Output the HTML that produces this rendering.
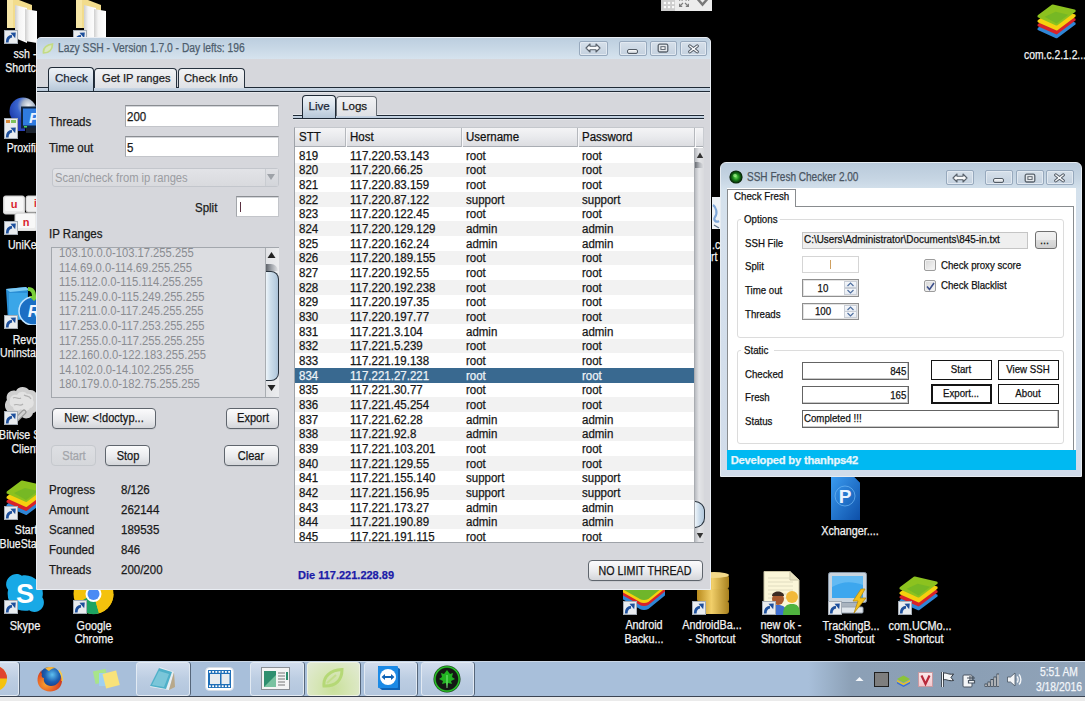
<!DOCTYPE html>
<html><head><meta charset="utf-8"><style>
html,body{margin:0;padding:0;}
body{width:1085px;height:701px;background:#000;position:relative;overflow:hidden;font-family:"Liberation Sans",sans-serif;}
body>div{position:absolute;box-sizing:border-box;}
.t{white-space:nowrap;-webkit-text-stroke:0.25px currentColor;}
</style></head><body>
<svg style="position:absolute;left:5px;top:0px" width="33" height="44" viewBox="0 0 33 44"><defs><linearGradient id="pap" x1="0" x2="1"><stop offset="0" stop-color="#cfcfcf"/><stop offset="0.35" stop-color="#f4f4f4"/><stop offset="1" stop-color="#ffffff"/></linearGradient></defs><path d="M2 0 H14 L27 5 V28 H2 Z" fill="#f2dc8c"/><path d="M2 0 H8 V28 H2 Z" fill="#f6e6a6"/><path d="M10 5 L22 8 V43 L10 38 Z" fill="url(#pap)"/><path d="M20 9 L32 11 V43 L20 41 Z" fill="url(#pap)"/></svg>
<svg style="position:absolute;left:4px;top:30px" width="14" height="14" viewBox="0 0 14 14"><rect x="0.5" y="0.5" width="13" height="13" fill="#e9ecef" stroke="#a5adb6" stroke-width="1"/><path d="M3.2 12.5 C3.2 8.5 5 6.5 8 6.2" stroke="#1d4f9c" stroke-width="2.8" fill="none"/><path d="M6.5 2.8 L11.8 2.6 L11.2 8.2 Z" fill="#1d4f9c"/></svg>
<div class="t" style="left:-125px;width:300px;text-align:center;top:48.24px;font-size:12px;line-height:12px;color:#f4f4f4;text-shadow:0 1px 1px #000,0 0 2px #000;transform:scaleX(0.88);transform-origin:50% 0;">ssh -</div>
<div class="t" style="left:-125px;width:300px;text-align:center;top:61.94px;font-size:12px;line-height:12px;color:#f4f4f4;text-shadow:0 1px 1px #000,0 0 2px #000;transform:scaleX(0.88);transform-origin:50% 0;">Shortcut</div>
<svg style="position:absolute;left:74px;top:0px" width="33" height="44" viewBox="0 0 33 44"><defs><linearGradient id="pap" x1="0" x2="1"><stop offset="0" stop-color="#cfcfcf"/><stop offset="0.35" stop-color="#f4f4f4"/><stop offset="1" stop-color="#ffffff"/></linearGradient></defs><path d="M2 0 H14 L27 5 V28 H2 Z" fill="#f2dc8c"/><path d="M2 0 H8 V28 H2 Z" fill="#f6e6a6"/><path d="M10 5 L22 8 V43 L10 38 Z" fill="url(#pap)"/><path d="M20 9 L32 11 V43 L20 41 Z" fill="url(#pap)"/></svg>
<svg style="position:absolute;left:73px;top:30px" width="14" height="14" viewBox="0 0 14 14"><rect x="0.5" y="0.5" width="13" height="13" fill="#e9ecef" stroke="#a5adb6" stroke-width="1"/><path d="M3.2 12.5 C3.2 8.5 5 6.5 8 6.2" stroke="#1d4f9c" stroke-width="2.8" fill="none"/><path d="M6.5 2.8 L11.8 2.6 L11.2 8.2 Z" fill="#1d4f9c"/></svg>
<svg style="position:absolute;left:8px;top:96px" width="30" height="40" viewBox="0 0 30 40"><defs><radialGradient id="pg" cx="70%" cy="30%" r="75%"><stop offset="0" stop-color="#f0f2f4"/><stop offset="0.3" stop-color="#aab6c8"/><stop offset="0.55" stop-color="#3a66d0"/><stop offset="1" stop-color="#1f3fae"/></radialGradient></defs><circle cx="15" cy="15" r="13.5" fill="url(#pg)"/><rect x="5" y="24" width="12" height="11" fill="#2a40b8"/><rect x="13" y="10.5" width="18" height="22" fill="#10243f"/><rect x="15" y="12.5" width="16" height="17" fill="#2f7be0"/><text x="21" y="27" font-family="Liberation Sans" font-weight="bold" font-style="italic" font-size="15" fill="#e8f2ff">P</text><rect x="18" y="32" width="10" height="5" fill="#1c2430"/><rect x="16" y="30" width="3" height="1.5" fill="#4fd35a"/></svg>
<svg style="position:absolute;left:4px;top:118px" width="14" height="21" viewBox="0 0 14 21"><rect x="0.5" y="0.5" width="13" height="20" fill="#e9ecef" stroke="#a5adb6"/><rect x="2" y="2" width="4" height="3" fill="#d88a3a"/><rect x="7" y="2" width="5" height="3" fill="#7cc25a"/><g transform="translate(0 7)"><path d="M3.2 12.5 C3.2 8.5 5 6.5 8 6.2" stroke="#1d4f9c" stroke-width="2.8" fill="none"/><path d="M6.5 2.8 L11.8 2.6 L11.2 8.2 Z" fill="#1d4f9c"/></g></svg>
<div class="t" style="left:-124.5px;width:300px;text-align:center;top:142.44px;font-size:12px;line-height:12px;color:#f4f4f4;text-shadow:0 1px 1px #000,0 0 2px #000;transform:scaleX(0.88);transform-origin:50% 0;">Proxifier</div>
<svg style="position:absolute;left:3px;top:195px" width="34" height="36" viewBox="0 0 34 36"><rect x="0.5" y="1" width="21" height="18" rx="2" fill="#e9e9e9" stroke="#cfcfcf"/><rect x="2" y="2" width="18" height="14" rx="1.5" fill="#f7f7f7"/><text x="11" y="13" font-family="Liberation Sans" font-weight="bold" font-size="11" fill="#d9242f" text-anchor="middle">u</text><rect x="23" y="1" width="14" height="16" rx="2" fill="#efefef" stroke="#cfcfcf"/><text x="31" y="12" font-family="Liberation Sans" font-weight="bold" font-size="10" fill="#d9242f">i</text><rect x="12" y="18" width="22" height="18" rx="2" fill="#ebebeb" stroke="#cfcfcf"/><rect x="13" y="19" width="19" height="14" rx="1.5" fill="#f8f8f8"/><text x="23" y="31" font-family="Liberation Sans" font-weight="bold" font-size="11" fill="#d9242f" text-anchor="middle">n</text></svg>
<svg style="position:absolute;left:4px;top:220.5px" width="14" height="14" viewBox="0 0 14 14"><rect x="0.5" y="0.5" width="13" height="13" fill="#e9ecef" stroke="#a5adb6" stroke-width="1"/><path d="M3.2 12.5 C3.2 8.5 5 6.5 8 6.2" stroke="#1d4f9c" stroke-width="2.8" fill="none"/><path d="M6.5 2.8 L11.8 2.6 L11.2 8.2 Z" fill="#1d4f9c"/></svg>
<div class="t" style="left:-125px;width:300px;text-align:center;top:238.94px;font-size:12px;line-height:12px;color:#f4f4f4;text-shadow:0 1px 1px #000,0 0 2px #000;transform:scaleX(0.88);transform-origin:50% 0;">UniKey</div>
<svg style="position:absolute;left:4px;top:285px" width="33" height="40" viewBox="0 0 33 40"><path d="M2 4 L22 2 L24 6 V34 L4 36 Z" fill="#2a8fd6"/><path d="M2 4 L22 2 L26 5 L6 7 Z" fill="#7ccaf5"/><rect x="5" y="8" width="18" height="26" fill="#3aa6e8"/><circle cx="29" cy="26" r="14" fill="#1b6fc4" stroke="#bfe3ff" stroke-width="1.5"/><text x="30" y="32" font-family="Liberation Sans" font-weight="bold" font-style="italic" font-size="17" fill="#f0f6ff" text-anchor="middle">R</text><path d="M24 2 C30 2 32 6 32 11 L35 11 L30 16 L25 11 L28 11 C28 8 27 6 24 6 Z" fill="#7bcf3a"/></svg>
<svg style="position:absolute;left:4px;top:315px" width="14" height="14" viewBox="0 0 14 14"><rect x="0.5" y="0.5" width="13" height="13" fill="#e9ecef" stroke="#a5adb6" stroke-width="1"/><path d="M3.2 12.5 C3.2 8.5 5 6.5 8 6.2" stroke="#1d4f9c" stroke-width="2.8" fill="none"/><path d="M6.5 2.8 L11.8 2.6 L11.2 8.2 Z" fill="#1d4f9c"/></svg>
<div class="t" style="left:-125px;width:300px;text-align:center;top:334.34px;font-size:12px;line-height:12px;color:#f4f4f4;text-shadow:0 1px 1px #000,0 0 2px #000;transform:scaleX(0.88);transform-origin:50% 0;">Revo</div>
<div class="t" style="left:-125px;width:300px;text-align:center;top:347.14px;font-size:12px;line-height:12px;color:#f4f4f4;text-shadow:0 1px 1px #000,0 0 2px #000;transform:scaleX(0.88);transform-origin:50% 0;">Uninstaller</div>
<svg style="position:absolute;left:4px;top:386px" width="33" height="36" viewBox="0 0 33 36"><path d="M3 14 C1 8 7 3 12 5 C14 0 22 0 25 4 C31 3 35 9 33 14 C36 18 34 26 29 27 C28 33 20 34 17 30 C13 34 5 32 5 26 C0 24 0 17 3 14 Z" fill="#cfcfcf"/><path d="M6 14 C6 10 10 8 13 9 C15 5 21 5 23 8 C27 7 30 11 29 14 C31 17 29 22 26 22 C24 26 19 26 17 23 C14 26 9 25 9 21 C6 20 5 17 6 14 Z" fill="#e6e6e6" opacity="0.8"/><path d="M9 12 C12 10 14 14 17 12 M20 9 C23 11 25 9 27 13 M10 19 C13 17 16 21 19 18" stroke="#b0b0b0" stroke-width="1.2" fill="none"/><path d="M20 26 L13 33" stroke="#9a9a9a" stroke-width="5" stroke-linecap="round"/><path d="M20 26 L13 33" stroke="#d0d0d0" stroke-width="2.5" stroke-linecap="round"/></svg>
<svg style="position:absolute;left:4px;top:411px" width="14" height="14" viewBox="0 0 14 14"><rect x="0.5" y="0.5" width="13" height="13" fill="#e9ecef" stroke="#a5adb6" stroke-width="1"/><path d="M3.2 12.5 C3.2 8.5 5 6.5 8 6.2" stroke="#1d4f9c" stroke-width="2.8" fill="none"/><path d="M6.5 2.8 L11.8 2.6 L11.2 8.2 Z" fill="#1d4f9c"/></svg>
<div class="t" style="left:-123.2px;width:300px;text-align:center;top:428.84px;font-size:12px;line-height:12px;color:#f4f4f4;text-shadow:0 1px 1px #000,0 0 2px #000;transform:scaleX(0.88);transform-origin:50% 0;">Bitvise SSH</div>
<div class="t" style="left:-125px;width:300px;text-align:center;top:442.64px;font-size:12px;line-height:12px;color:#f4f4f4;text-shadow:0 1px 1px #000,0 0 2px #000;transform:scaleX(0.88);transform-origin:50% 0;">Client</div>
<svg style="position:absolute;left:5px;top:480px" width="43" height="37" viewBox="0 0 43 37"><g transform="scale(1.0)"><path d="M3 12.5 L17 2 L39 7 L21 20.5 Z" transform="translate(0 13)" fill="#2f86d6" stroke="#2f86d6" stroke-width="3" stroke-linejoin="round"/><path d="M3 12.5 L17 2 L39 7 L21 20.5 Z" transform="translate(0 9)" fill="#d8232a" stroke="#d8232a" stroke-width="3" stroke-linejoin="round"/><path d="M3 12.5 L17 2 L39 7 L21 20.5 Z" transform="translate(0 5)" fill="#f6d10f" stroke="#f6d10f" stroke-width="3" stroke-linejoin="round"/><path d="M3 12.5 L17 2 L39 7 L21 20.5 Z" fill="#8cc21f" stroke="#8cc21f" stroke-width="3" stroke-linejoin="round"/><path d="M9 13 L21 20 L33 11 L20 8 Z" fill="#5fae2a" opacity="0.5"/></g></svg>
<svg style="position:absolute;left:4px;top:506px" width="14" height="14" viewBox="0 0 14 14"><rect x="0.5" y="0.5" width="13" height="13" fill="#e9ecef" stroke="#a5adb6" stroke-width="1"/><path d="M3.2 12.5 C3.2 8.5 5 6.5 8 6.2" stroke="#1d4f9c" stroke-width="2.8" fill="none"/><path d="M6.5 2.8 L11.8 2.6 L11.2 8.2 Z" fill="#1d4f9c"/></svg>
<div class="t" style="left:-124px;width:300px;text-align:center;top:524.14px;font-size:12px;line-height:12px;color:#f4f4f4;text-shadow:0 1px 1px #000,0 0 2px #000;transform:scaleX(0.88);transform-origin:50% 0;">Start</div>
<div class="t" style="left:-124px;width:300px;text-align:center;top:537.54px;font-size:12px;line-height:12px;color:#f4f4f4;text-shadow:0 1px 1px #000,0 0 2px #000;transform:scaleX(0.88);transform-origin:50% 0;">BlueStacks</div>
<svg style="position:absolute;left:4px;top:572px" width="42" height="42" viewBox="0 0 42 42"><g transform="scale(1.05)"><path d="M12 2 C7 2 2 6 2 12 C2 14 3 16 4 17 C3.5 18.5 3.5 20 3.5 21 C3.5 31 11 37 20 37 C22 37 23 37 24 36.5 C25.5 37.5 27 38 29 38 C34 38 38 34 38 29 C38 27 37.5 25.5 36.5 24 C37 22.5 37 21 37 20 C37 11 29 3 20 3 C19 3 18 3 17 3.5 C15.5 2.5 14 2 12 2 Z" fill="#18a9e6"/><text x="20" y="30" font-family="Liberation Sans" font-weight="bold" font-size="26" fill="#fff" text-anchor="middle">S</text></g></svg>
<svg style="position:absolute;left:4px;top:600px" width="14" height="14" viewBox="0 0 14 14"><rect x="0.5" y="0.5" width="13" height="13" fill="#e9ecef" stroke="#a5adb6" stroke-width="1"/><path d="M3.2 12.5 C3.2 8.5 5 6.5 8 6.2" stroke="#1d4f9c" stroke-width="2.8" fill="none"/><path d="M6.5 2.8 L11.8 2.6 L11.2 8.2 Z" fill="#1d4f9c"/></svg>
<div class="t" style="left:-125px;width:300px;text-align:center;top:619.64px;font-size:12px;line-height:12px;color:#f4f4f4;text-shadow:0 1px 1px #000,0 0 2px #000;transform:scaleX(0.92);transform-origin:50% 0;">Skype</div>
<svg style="position:absolute;left:73px;top:589px" width="42" height="26" viewBox="0 0 42 26"><circle cx="20.5" cy="5" r="20" fill="#f4c20d"/><path d="M20.5 5 L3 15 A20 20 0 0 0 26 24.3 Z" fill="#1da462"/><path d="M20.5 5 L40.5 5 A20 20 0 0 1 26 24.3 Z" fill="#f4c20d"/><circle cx="20.5" cy="5" r="8" fill="#fff"/><circle cx="20.5" cy="5" r="6" fill="#4a8af4"/></svg>
<svg style="position:absolute;left:73px;top:600px" width="14" height="14" viewBox="0 0 14 14"><rect x="0.5" y="0.5" width="13" height="13" fill="#e9ecef" stroke="#a5adb6" stroke-width="1"/><path d="M3.2 12.5 C3.2 8.5 5 6.5 8 6.2" stroke="#1d4f9c" stroke-width="2.8" fill="none"/><path d="M6.5 2.8 L11.8 2.6 L11.2 8.2 Z" fill="#1d4f9c"/></svg>
<div class="t" style="left:-56px;width:300px;text-align:center;top:619.64px;font-size:12px;line-height:12px;color:#f4f4f4;text-shadow:0 1px 1px #000,0 0 2px #000;transform:scaleX(0.9);transform-origin:50% 0;">Google</div>
<div class="t" style="left:-56px;width:300px;text-align:center;top:633.04px;font-size:12px;line-height:12px;color:#f4f4f4;text-shadow:0 1px 1px #000,0 0 2px #000;transform:scaleX(0.9);transform-origin:50% 0;">Chrome</div>
<svg style="position:absolute;left:1036px;top:4px" width="42" height="36" viewBox="0 0 42 36"><g transform="scale(0.98)"><path d="M3 12.5 L17 2 L39 7 L21 20.5 Z" transform="translate(0 13)" fill="#2f86d6" stroke="#2f86d6" stroke-width="3" stroke-linejoin="round"/><path d="M3 12.5 L17 2 L39 7 L21 20.5 Z" transform="translate(0 9)" fill="#d8232a" stroke="#d8232a" stroke-width="3" stroke-linejoin="round"/><path d="M3 12.5 L17 2 L39 7 L21 20.5 Z" transform="translate(0 5)" fill="#f6d10f" stroke="#f6d10f" stroke-width="3" stroke-linejoin="round"/><path d="M3 12.5 L17 2 L39 7 L21 20.5 Z" fill="#8cc21f" stroke="#8cc21f" stroke-width="3" stroke-linejoin="round"/><path d="M9 13 L21 20 L33 11 L20 8 Z" fill="#5fae2a" opacity="0.5"/></g></svg>
<div class="t" style="left:905px;width:300px;text-align:center;top:48.64px;font-size:12px;line-height:12px;color:#f4f4f4;text-shadow:0 1px 1px #000,0 0 2px #000;transform:scaleX(0.86);transform-origin:50% 0;">com.c.2.1.2...</div>
<svg style="position:absolute;left:622px;top:587px" width="46" height="26" viewBox="0 0 46 26"><path d="M2 0 H42 V8 L26 21 Q22 23 18 21 L2 12 Z" fill="#2f86d6" stroke="#2f86d6" stroke-width="2" stroke-linejoin="round"/><path d="M2 0 H42 V4 L26 17 Q22 19 18 17 L2 8 Z" fill="#d8232a" stroke="#d8232a" stroke-width="2" stroke-linejoin="round"/><path d="M2 0 H42 V1 L26 14 Q22 16 18 14 L2 5 Z" fill="#f6d10f" stroke="#f6d10f" stroke-width="2" stroke-linejoin="round"/><path d="M2 0 H42 V-2 L26 11 Q22 13 18 11 L2 2 Z" fill="#6fb62a" stroke="#6fb62a" stroke-width="2" stroke-linejoin="round"/></svg>
<svg style="position:absolute;left:623px;top:601px" width="14" height="14" viewBox="0 0 14 14"><rect x="0.5" y="0.5" width="13" height="13" fill="#e9ecef" stroke="#a5adb6" stroke-width="1"/><path d="M3.2 12.5 C3.2 8.5 5 6.5 8 6.2" stroke="#1d4f9c" stroke-width="2.8" fill="none"/><path d="M6.5 2.8 L11.8 2.6 L11.2 8.2 Z" fill="#1d4f9c"/></svg>
<div class="t" style="left:493.5px;width:300px;text-align:center;top:618.84px;font-size:12px;line-height:12px;color:#f4f4f4;text-shadow:0 1px 1px #000,0 0 2px #000;transform:scaleX(0.9);transform-origin:50% 0;">Android</div>
<div class="t" style="left:493.5px;width:300px;text-align:center;top:632.64px;font-size:12px;line-height:12px;color:#f4f4f4;text-shadow:0 1px 1px #000,0 0 2px #000;transform:scaleX(0.9);transform-origin:50% 0;">Backu...</div>
<svg style="position:absolute;left:695px;top:571px" width="36" height="44" viewBox="0 0 36 44"><defs><linearGradient id="gold" x1="0" x2="1"><stop offset="0" stop-color="#b88a1c"/><stop offset="0.45" stop-color="#f1cf6a"/><stop offset="1" stop-color="#a8801e"/></linearGradient></defs><rect x="2" y="30" width="32" height="13" rx="3" fill="url(#gold)"/><rect x="2" y="17" width="32" height="14" rx="3" fill="url(#gold)"/><rect x="4" y="4" width="30" height="14" rx="3" fill="url(#gold)"/><ellipse cx="19" cy="4" rx="15" ry="3" fill="#f3d98a"/></svg>
<svg style="position:absolute;left:692px;top:601px" width="14" height="14" viewBox="0 0 14 14"><rect x="0.5" y="0.5" width="13" height="13" fill="#e9ecef" stroke="#a5adb6" stroke-width="1"/><path d="M3.2 12.5 C3.2 8.5 5 6.5 8 6.2" stroke="#1d4f9c" stroke-width="2.8" fill="none"/><path d="M6.5 2.8 L11.8 2.6 L11.2 8.2 Z" fill="#1d4f9c"/></svg>
<div class="t" style="left:562px;width:300px;text-align:center;top:618.84px;font-size:12px;line-height:12px;color:#f4f4f4;text-shadow:0 1px 1px #000,0 0 2px #000;transform:scaleX(0.9);transform-origin:50% 0;">AndroidBa...</div>
<div class="t" style="left:562px;width:300px;text-align:center;top:632.64px;font-size:12px;line-height:12px;color:#f4f4f4;text-shadow:0 1px 1px #000,0 0 2px #000;transform:scaleX(0.9);transform-origin:50% 0;">- Shortcut</div>
<svg style="position:absolute;left:763px;top:571px" width="38" height="44" viewBox="0 0 38 44"><path d="M1 0.5 H27 L36 9 V43.5 H1 Z" fill="#fbf6d8" stroke="#c9c3a5"/><path d="M27 0.5 V9 H36" fill="#e8e2c0" stroke="#c9c3a5"/><path d="M5 7 H30" stroke="#e0dcc0" stroke-width="1"/><path d="M5 11 H30" stroke="#e0dcc0" stroke-width="1"/><path d="M5 15 H30" stroke="#e0dcc0" stroke-width="1"/><path d="M5 19 H30" stroke="#e0dcc0" stroke-width="1"/><path d="M5 23 H30" stroke="#e0dcc0" stroke-width="1"/><path d="M5 27 H30" stroke="#e0dcc0" stroke-width="1"/><circle cx="15" cy="28" r="6" fill="#a8592e"/><path d="M9 25 C9 19 21 19 21 25" fill="#3a2a22"/><path d="M6 44 C6 36 10 34 15 34 C20 34 24 36 24 44 Z" fill="#3f6fd0"/><circle cx="29" cy="26" r="6" fill="#f2b93a"/><path d="M20 44 C20 35 24 33 29 33 C34 33 37 35 37 44 Z" fill="#4fb33f"/></svg>
<svg style="position:absolute;left:762px;top:601px" width="14" height="14" viewBox="0 0 14 14"><rect x="0.5" y="0.5" width="13" height="13" fill="#e9ecef" stroke="#a5adb6" stroke-width="1"/><path d="M3.2 12.5 C3.2 8.5 5 6.5 8 6.2" stroke="#1d4f9c" stroke-width="2.8" fill="none"/><path d="M6.5 2.8 L11.8 2.6 L11.2 8.2 Z" fill="#1d4f9c"/></svg>
<div class="t" style="left:631px;width:300px;text-align:center;top:618.84px;font-size:12px;line-height:12px;color:#f4f4f4;text-shadow:0 1px 1px #000,0 0 2px #000;transform:scaleX(0.9);transform-origin:50% 0;">new ok -</div>
<div class="t" style="left:631px;width:300px;text-align:center;top:632.64px;font-size:12px;line-height:12px;color:#f4f4f4;text-shadow:0 1px 1px #000,0 0 2px #000;transform:scaleX(0.9);transform-origin:50% 0;">Shortcut</div>
<svg style="position:absolute;left:828px;top:476px" width="34" height="45" viewBox="0 0 34 45"><path d="M3 1 H26 L32 7 V44 H3 Z" fill="#1f6fcf"/><path d="M3 1 H26 L32 7 V44 H3 Z" fill="url(#xg)"/><defs><linearGradient id="xg" x1="0" y1="0" x2="1" y2="1"><stop offset="0" stop-color="#3a9bf0"/><stop offset="1" stop-color="#0d4fa8"/></linearGradient></defs><circle cx="17" cy="20" r="10" fill="none" stroke="#6fb8f5" stroke-width="1" opacity="0.7"/><text x="17" y="27" font-family="Liberation Sans" font-weight="bold" font-size="19" fill="#eaf4ff" text-anchor="middle">P</text></svg>
<div class="t" style="left:699.5px;width:300px;text-align:center;top:524.84px;font-size:12px;line-height:12px;color:#f4f4f4;text-shadow:0 1px 1px #000,0 0 2px #000;transform:scaleX(0.9);transform-origin:50% 0;">Xchanger....</div>
<svg style="position:absolute;left:827px;top:571px" width="46" height="43" viewBox="0 0 46 43"><rect x="1.5" y="1.5" width="38" height="30" rx="2" fill="#c9d4de" stroke="#8695a5"/><rect x="5" y="5" width="31" height="22" fill="#3da7ee"/><path d="M5 5 H36 V14 C25 10 15 10 5 16 Z" fill="#7cc6f6" opacity="0.6"/><rect x="10" y="32" width="22" height="4" fill="#aab4bf"/><rect x="6" y="36" width="30" height="6" rx="1" fill="#dfe5eb" stroke="#9aa5b1"/><path d="M34 18 L26 30 H31 L27 42 L39 27 H33 L38 18 Z" fill="#f5c21b" stroke="#b88a10" stroke-width="0.8"/></svg>
<svg style="position:absolute;left:828px;top:601px" width="14" height="14" viewBox="0 0 14 14"><rect x="0.5" y="0.5" width="13" height="13" fill="#e9ecef" stroke="#a5adb6" stroke-width="1"/><path d="M3.2 12.5 C3.2 8.5 5 6.5 8 6.2" stroke="#1d4f9c" stroke-width="2.8" fill="none"/><path d="M6.5 2.8 L11.8 2.6 L11.2 8.2 Z" fill="#1d4f9c"/></svg>
<div class="t" style="left:701px;width:300px;text-align:center;top:619.84px;font-size:12px;line-height:12px;color:#f4f4f4;text-shadow:0 1px 1px #000,0 0 2px #000;transform:scaleX(0.9);transform-origin:50% 0;">TrackingB...</div>
<div class="t" style="left:701px;width:300px;text-align:center;top:632.64px;font-size:12px;line-height:12px;color:#f4f4f4;text-shadow:0 1px 1px #000,0 0 2px #000;transform:scaleX(0.9);transform-origin:50% 0;">- Shortcut</div>
<svg style="position:absolute;left:898px;top:576px" width="42" height="36" viewBox="0 0 42 36"><g transform="scale(0.98)"><path d="M3 12.5 L17 2 L39 7 L21 20.5 Z" transform="translate(0 13)" fill="#2f86d6" stroke="#2f86d6" stroke-width="3" stroke-linejoin="round"/><path d="M3 12.5 L17 2 L39 7 L21 20.5 Z" transform="translate(0 9)" fill="#d8232a" stroke="#d8232a" stroke-width="3" stroke-linejoin="round"/><path d="M3 12.5 L17 2 L39 7 L21 20.5 Z" transform="translate(0 5)" fill="#f6d10f" stroke="#f6d10f" stroke-width="3" stroke-linejoin="round"/><path d="M3 12.5 L17 2 L39 7 L21 20.5 Z" fill="#8cc21f" stroke="#8cc21f" stroke-width="3" stroke-linejoin="round"/><path d="M9 13 L21 20 L33 11 L20 8 Z" fill="#5fae2a" opacity="0.5"/></g></svg>
<svg style="position:absolute;left:898px;top:601px" width="14" height="14" viewBox="0 0 14 14"><rect x="0.5" y="0.5" width="13" height="13" fill="#e9ecef" stroke="#a5adb6" stroke-width="1"/><path d="M3.2 12.5 C3.2 8.5 5 6.5 8 6.2" stroke="#1d4f9c" stroke-width="2.8" fill="none"/><path d="M6.5 2.8 L11.8 2.6 L11.2 8.2 Z" fill="#1d4f9c"/></svg>
<div class="t" style="left:769.5px;width:300px;text-align:center;top:619.84px;font-size:12px;line-height:12px;color:#f4f4f4;text-shadow:0 1px 1px #000,0 0 2px #000;transform:scaleX(0.9);transform-origin:50% 0;">com.UCMo...</div>
<div class="t" style="left:769.5px;width:300px;text-align:center;top:632.64px;font-size:12px;line-height:12px;color:#f4f4f4;text-shadow:0 1px 1px #000,0 0 2px #000;transform:scaleX(0.9);transform-origin:50% 0;">- Shortcut</div>
<svg style="position:absolute;left:711.5px;top:196.5px" width="8" height="32" viewBox="0 0 8 32"><rect x="0" y="0" width="8" height="32" fill="#eef2f6"/><path d="M1 8 C4 10 6 16 3 20 C1 23 4 26 7 24" stroke="#7fa7d9" stroke-width="2.2" fill="none"/><path d="M2 28 L7 31" stroke="#5a6f88" stroke-width="1.2"/></svg>
<div class="t" style="left:712px;top:239.14px;font-size:12px;line-height:12px;color:#f4f4f4;transform:scaleX(0.88);transform-origin:0 0;">.c</div>
<div class="t" style="left:711px;top:250.54px;font-size:12px;line-height:12px;color:#f4f4f4;transform:scaleX(0.88);transform-origin:0 0;">rt</div>
<div style="left:36px;top:37px;width:675px;height:553px;background:#d6d7dc;border:1px solid #e9edf3;border-top-left-radius:5px;border-top-right-radius:5px;"></div>
<div style="left:37px;top:38px;width:673px;height:20.5px;background:linear-gradient(#bccedf,#c8d8e6 50%,#d6e3ee);border-top-left-radius:4px;border-top-right-radius:4px;"></div>
<svg style="position:absolute;left:41.5px;top:42.5px" width="12" height="11" viewBox="0 0 12 11"><path d="M1.5 10 C1 5.5 4 2 10.5 1 C10.5 6.5 7 10 1.5 10 Z" fill="#d9e7c0" stroke="#c3db84" stroke-width="1.7"/></svg>
<div class="t" style="left:58.3px;top:42.44px;font-size:12px;line-height:12px;color:#4e5e6e;transform:scaleX(0.856);transform-origin:0 0;">Lazy SSH - Version 1.7.0 - Day lefts: 196</div>
<div style="left:579px;top:41px;width:28.5px;height:14.5px;border:1px solid #97a9bd;border-radius:2px;background:linear-gradient(#d6e0ea,#c4d1df);box-shadow:inset 0 0 0 1px #e2e9f1;"></div>
<div style="left:618.5px;top:41px;width:28.0px;height:14.5px;border:1px solid #97a9bd;border-radius:2px;background:linear-gradient(#d6e0ea,#c4d1df);box-shadow:inset 0 0 0 1px #e2e9f1;"></div>
<div style="left:649.5px;top:41px;width:27.5px;height:14.5px;border:1px solid #97a9bd;border-radius:2px;background:linear-gradient(#d6e0ea,#c4d1df);box-shadow:inset 0 0 0 1px #e2e9f1;"></div>
<div style="left:679.5px;top:41px;width:27.5px;height:14.5px;border:1px solid #97a9bd;border-radius:2px;background:linear-gradient(#d6e0ea,#c4d1df);box-shadow:inset 0 0 0 1px #e2e9f1;"></div>
<svg style="position:absolute;left:585.25px;top:43.25px" width="16" height="10" viewBox="0 0 16 10"><path d="M1 5 L5 1 V3.3 H11 V1 L15 5 L11 9 V6.7 H5 V9 Z" fill="#fafbfc" stroke="#58616b" stroke-width="1.1" stroke-linejoin="round"/></svg>
<div style="left:627.0px;top:48.75px;width:11px;height:5px;border:1px solid #525b65;border-radius:2px;background:linear-gradient(#ffffff,#dfe3e7 60%,#b9bfc6);"></div>
<svg style="position:absolute;left:657.25px;top:43.25px" width="12" height="10" viewBox="0 0 12 10"><rect x="1.2" y="1.2" width="9.6" height="7.8" rx="1.5" fill="#e3e7eb" stroke="#5a636d" stroke-width="1.3"/><rect x="3.9" y="3.7" width="4.2" height="2.7" fill="#fdfdfd" stroke="#5a636d" stroke-width="1"/></svg>
<svg style="position:absolute;left:686.75px;top:43.75px" width="13" height="10" viewBox="0 0 13 10"><path d="M2.8 2 L10.2 7.8 M10.2 2 L2.8 7.8" stroke="#535c66" stroke-width="3.3" stroke-linecap="round"/><path d="M2.8 2 L10.2 7.8 M10.2 2 L2.8 7.8" stroke="#f7f8fa" stroke-width="1.4" stroke-linecap="round"/></svg>
<div style="left:37px;top:87px;width:673px;height:1px;background:#1f2a36;"></div>
<div style="left:37px;top:88px;width:673px;height:3px;background:linear-gradient(#c9d6e4,#b9c9da);"></div>
<div style="left:37px;top:91px;width:673px;height:1px;background:#1f2a36;"></div>
<div style="left:37px;top:92px;width:673px;height:1px;background:#e4e6ea;"></div>
<div style="left:94px;top:68px;width:83px;height:20px;border:1px solid #27323e;border-bottom:none;border-radius:4px 4px 0 0;background:linear-gradient(#f2f3f5,#dfe1e5);"></div>
<div style="left:177.5px;top:68px;width:67.5px;height:20px;border:1px solid #27323e;border-bottom:none;border-radius:4px 4px 0 0;background:linear-gradient(#f2f3f5,#dfe1e5);"></div>
<div style="left:47.5px;top:67px;width:46.0px;height:24px;border:1px solid #1f2a36;border-bottom:none;border-radius:4px 4px 0 0;background:linear-gradient(#eef2f6,#dce5ee 40%,#b6c7d8);"></div>
<div class="t" style="left:55px;top:71.58px;font-size:11.6px;line-height:11.6px;color:#1b2736;">Check</div>
<div class="t" style="left:101.8px;top:71.58px;font-size:11.6px;line-height:11.6px;color:#1b1b1b;transform:scaleX(0.96);transform-origin:0 0;">Get IP ranges</div>
<div class="t" style="left:184.3px;top:71.58px;font-size:11.6px;line-height:11.6px;color:#1b1b1b;transform:scaleX(0.97);transform-origin:0 0;">Check Info</div>
<div class="t" style="left:48.7px;top:116.04px;font-size:12px;line-height:12px;color:#1a1a1a;transform:scaleX(0.958);transform-origin:0 0;">Threads</div>
<div class="t" style="left:48.7px;top:142.04px;font-size:12px;line-height:12px;color:#1a1a1a;transform:scaleX(0.958);transform-origin:0 0;">Time out</div>
<div style="left:124.5px;top:105px;width:154.5px;height:21.5px;background:#fff;border:1px solid #c3c5ca;border-top-color:#8a8d92;border-left-color:#a2a5aa;box-shadow:inset 0 1px 0 #d4d6da;"></div>
<div class="t" style="left:127.2px;top:110.74px;font-size:12px;line-height:12px;color:#1a1a1a;transform:scaleX(0.958);transform-origin:0 0;">200</div>
<div style="left:124.5px;top:136px;width:154.5px;height:21.30000000000001px;background:#fff;border:1px solid #c3c5ca;border-top-color:#8a8d92;border-left-color:#a2a5aa;box-shadow:inset 0 1px 0 #d4d6da;"></div>
<div class="t" style="left:127.2px;top:142.24px;font-size:12px;line-height:12px;color:#1a1a1a;transform:scaleX(0.958);transform-origin:0 0;">5</div>
<div style="left:51.5px;top:168px;width:227px;height:18.5px;border:1px solid #c3c6cc;border-radius:3px;background:linear-gradient(#e2e3e7,#d9dade);"></div>
<div style="left:264.5px;top:169px;width:13.5px;height:16.5px;border-left:1px solid #c9ccd1;background:linear-gradient(#dfe0e4,#d3d5da);"></div>
<svg style="position:absolute;left:266px;top:173px" width="10" height="8" viewBox="0 0 10 8"><path d="M1 1 H9 L5 7 Z" fill="#9ea2a8"/></svg>
<div class="t" style="left:55.2px;top:172.24px;font-size:12px;line-height:12px;color:#9a9ca1;-webkit-text-stroke:0;transform:scaleX(0.9340499999999999);transform-origin:0 0;">Scan/check from ip ranges</div>
<div class="t" style="left:195.2px;top:202.24px;font-size:12px;line-height:12px;color:#1a1a1a;transform:scaleX(0.958);transform-origin:0 0;">Split</div>
<div style="left:236px;top:196px;width:43px;height:21px;background:#fff;border:1px solid #c3c5ca;border-top-color:#8a8d92;border-left-color:#a2a5aa;box-shadow:inset 0 1px 0 #d4d6da;"></div>
<div style="left:240px;top:202px;width:1px;height:10px;background:#5a3040;"></div>
<div class="t" style="left:48.7px;top:227.94px;font-size:12px;line-height:12px;color:#1a1a1a;transform:scaleX(0.958);transform-origin:0 0;">IP Ranges</div>
<div style="left:51px;top:247px;width:228px;height:150.5px;background:#dcdde1;border:1px solid #a3a7ad;"></div>
<div style="left:52px;top:248px;width:212px;height:148px;overflow:hidden;"><div class="t" style="position:absolute;left:6.5px;top:-0.86px;font-size:12px;line-height:12px;color:#8a8c91;-webkit-text-stroke:0;transform:scaleX(0.934);transform-origin:0 0">103.10.0.0-103.17.255.255</div><div class="t" style="position:absolute;left:6.5px;top:13.70px;font-size:12px;line-height:12px;color:#8a8c91;-webkit-text-stroke:0;transform:scaleX(0.934);transform-origin:0 0">114.69.0.0-114.69.255.255</div><div class="t" style="position:absolute;left:6.5px;top:28.26px;font-size:12px;line-height:12px;color:#8a8c91;-webkit-text-stroke:0;transform:scaleX(0.934);transform-origin:0 0">115.112.0.0-115.114.255.255</div><div class="t" style="position:absolute;left:6.5px;top:42.82px;font-size:12px;line-height:12px;color:#8a8c91;-webkit-text-stroke:0;transform:scaleX(0.934);transform-origin:0 0">115.249.0.0-115.249.255.255</div><div class="t" style="position:absolute;left:6.5px;top:57.38px;font-size:12px;line-height:12px;color:#8a8c91;-webkit-text-stroke:0;transform:scaleX(0.934);transform-origin:0 0">117.211.0.0-117.245.255.255</div><div class="t" style="position:absolute;left:6.5px;top:71.94px;font-size:12px;line-height:12px;color:#8a8c91;-webkit-text-stroke:0;transform:scaleX(0.934);transform-origin:0 0">117.253.0.0-117.253.255.255</div><div class="t" style="position:absolute;left:6.5px;top:86.50px;font-size:12px;line-height:12px;color:#8a8c91;-webkit-text-stroke:0;transform:scaleX(0.934);transform-origin:0 0">117.255.0.0-117.255.255.255</div><div class="t" style="position:absolute;left:6.5px;top:101.06px;font-size:12px;line-height:12px;color:#8a8c91;-webkit-text-stroke:0;transform:scaleX(0.934);transform-origin:0 0">122.160.0.0-122.183.255.255</div><div class="t" style="position:absolute;left:6.5px;top:115.62px;font-size:12px;line-height:12px;color:#8a8c91;-webkit-text-stroke:0;transform:scaleX(0.934);transform-origin:0 0">14.102.0.0-14.102.255.255</div><div class="t" style="position:absolute;left:6.5px;top:130.18px;font-size:12px;line-height:12px;color:#8a8c91;-webkit-text-stroke:0;transform:scaleX(0.934);transform-origin:0 0">180.179.0.0-182.75.255.255</div></div>
<div style="left:264.5px;top:248px;width:14.5px;height:148.5px;background:linear-gradient(90deg,#e2e3e6,#ebecee);border-left:1px solid #a9adb2;"></div>
<svg style="position:absolute;left:265px;top:250px" width="13" height="10" viewBox="0 0 13 10"><path d="M2.5 8 H10.5 L6.5 2 Z" fill="#222"/></svg>
<svg style="position:absolute;left:265px;top:383px" width="13" height="10" viewBox="0 0 13 10"><path d="M2.5 2 H10.5 L6.5 8 Z" fill="#222"/></svg>
<div style="left:265.5px;top:264px;width:12.5px;height:7px;background:linear-gradient(90deg,#5f636a,#9fa3a9 45%,#e2e3e6);border-radius:0 9px 0 0;"></div>
<div style="left:265.5px;top:271px;width:13px;height:110px;border:1.6px solid #27313c;border-left:none;border-radius:0 8px 8px 0;background:linear-gradient(90deg,#eef5fa,#cfdfec 35%,#b9cee0 80%,#aac0d6);"></div>
<div style="left:51.5px;top:407.5px;width:104.0px;height:21.0px;border:1px solid #5f656d;border-radius:4px;background:linear-gradient(#fbfbfc,#eaebee 55%,#d4d6da);box-shadow:0 1px 0 #c9cbd0;"></div>
<div class="t" style="left:-46.5px;width:300px;text-align:center;top:412.44px;font-size:12px;line-height:12px;color:#151515;transform:scaleX(0.9196799999999999);transform-origin:50% 0;">New: &lt;!doctyp...</div>
<div style="left:226px;top:407.5px;width:53px;height:21.0px;border:1px solid #5f656d;border-radius:4px;background:linear-gradient(#fbfbfc,#eaebee 55%,#d4d6da);box-shadow:0 1px 0 #c9cbd0;"></div>
<div class="t" style="left:102.5px;width:300px;text-align:center;top:412.44px;font-size:12px;line-height:12px;color:#151515;transform:scaleX(0.9196799999999999);transform-origin:50% 0;">Export</div>
<div style="left:51px;top:444.5px;width:45px;height:21.0px;border:1px solid #c5c8cd;border-radius:4px;background:linear-gradient(#dedfe3,#d5d7db);"></div>
<div class="t" style="left:-76.5px;width:300px;text-align:center;top:450.44px;font-size:12px;line-height:12px;color:#a3a5aa;transform:scaleX(0.9196799999999999);transform-origin:50% 0;">Start</div>
<div style="left:105px;top:444.5px;width:45px;height:21.0px;border:1px solid #5f656d;border-radius:4px;background:linear-gradient(#fbfbfc,#eaebee 55%,#d4d6da);box-shadow:0 1px 0 #c9cbd0;"></div>
<div class="t" style="left:-22.5px;width:300px;text-align:center;top:450.44px;font-size:12px;line-height:12px;color:#151515;transform:scaleX(0.9196799999999999);transform-origin:50% 0;">Stop</div>
<div style="left:223.5px;top:444.5px;width:55.5px;height:21.0px;border:1px solid #5f656d;border-radius:4px;background:linear-gradient(#fbfbfc,#eaebee 55%,#d4d6da);box-shadow:0 1px 0 #c9cbd0;"></div>
<div class="t" style="left:101.25px;width:300px;text-align:center;top:450.44px;font-size:12px;line-height:12px;color:#151515;transform:scaleX(0.9196799999999999);transform-origin:50% 0;">Clear</div>
<div class="t" style="left:48.7px;top:484.04px;font-size:12px;line-height:12px;color:#1a1a1a;transform:scaleX(0.958);transform-origin:0 0;">Progress</div>
<div class="t" style="left:121.2px;top:484.04px;font-size:12px;line-height:12px;color:#1a1a1a;transform:scaleX(0.958);transform-origin:0 0;">8/126</div>
<div class="t" style="left:48.7px;top:504.04px;font-size:12px;line-height:12px;color:#1a1a1a;transform:scaleX(0.958);transform-origin:0 0;">Amount</div>
<div class="t" style="left:121.2px;top:504.04px;font-size:12px;line-height:12px;color:#1a1a1a;transform:scaleX(0.958);transform-origin:0 0;">262144</div>
<div class="t" style="left:48.7px;top:524.04px;font-size:12px;line-height:12px;color:#1a1a1a;transform:scaleX(0.958);transform-origin:0 0;">Scanned</div>
<div class="t" style="left:121.2px;top:524.04px;font-size:12px;line-height:12px;color:#1a1a1a;transform:scaleX(0.958);transform-origin:0 0;">189535</div>
<div class="t" style="left:48.7px;top:544.04px;font-size:12px;line-height:12px;color:#1a1a1a;transform:scaleX(0.958);transform-origin:0 0;">Founded</div>
<div class="t" style="left:121.2px;top:544.04px;font-size:12px;line-height:12px;color:#1a1a1a;transform:scaleX(0.958);transform-origin:0 0;">846</div>
<div class="t" style="left:48.7px;top:564.04px;font-size:12px;line-height:12px;color:#1a1a1a;transform:scaleX(0.958);transform-origin:0 0;">Threads</div>
<div class="t" style="left:121.2px;top:564.04px;font-size:12px;line-height:12px;color:#1a1a1a;transform:scaleX(0.958);transform-origin:0 0;">200/200</div>
<div style="left:292.5px;top:115px;width:411.5px;height:1px;background:#1f2a36;"></div>
<div style="left:292.5px;top:116px;width:411.5px;height:2px;background:linear-gradient(#c9d6e4,#b9c9da);"></div>
<div style="left:292.5px;top:118px;width:411.5px;height:1px;background:#1f2a36;"></div>
<div style="left:292.5px;top:119px;width:411.5px;height:1px;background:#e4e6ea;"></div>
<div style="left:292.5px;top:114px;width:411.5px;height:1px;background:#e4e6ea;"></div>
<div style="left:336px;top:95.5px;width:40.5px;height:20px;border:1px solid #6a7077;border-bottom:none;border-radius:4px 4px 0 0;background:linear-gradient(#f2f3f5,#dfe1e5);"></div>
<div style="left:301.5px;top:95px;width:34px;height:23px;border:1px solid #1f2a36;border-bottom:none;border-radius:4px 4px 0 0;background:linear-gradient(#eef2f6,#dce5ee 40%,#b6c7d8);"></div>
<div class="t" style="left:308.5px;top:99.68px;font-size:11.6px;line-height:11.6px;color:#1b2736;">Live</div>
<div class="t" style="left:342px;top:99.68px;font-size:11.6px;line-height:11.6px;color:#1b1b1b;">Logs</div>
<div style="left:294.3px;top:127.4px;width:409.49999999999994px;height:416.0px;background:#fff;border:1px solid #9ea2a8;border-top-color:#c4c7cc;border-right-color:#c9ccd1;"></div>
<div style="left:295.3px;top:128.4px;width:407.49999999999994px;height:19px;background:linear-gradient(#f4f4f6,#e9eaed 50%,#dcdde1);border-bottom:1px solid #a9adb3;"></div>
<div style="left:345.4px;top:128.4px;width:1px;height:19px;background:#b5b8bd;"></div>
<div style="left:346.4px;top:128.4px;width:1px;height:19px;background:#f7f7f9;"></div>
<div style="left:461.1px;top:128.4px;width:1px;height:19px;background:#b5b8bd;"></div>
<div style="left:462.1px;top:128.4px;width:1px;height:19px;background:#f7f7f9;"></div>
<div style="left:577.4px;top:128.4px;width:1px;height:19px;background:#b5b8bd;"></div>
<div style="left:578.4px;top:128.4px;width:1px;height:19px;background:#f7f7f9;"></div>
<div style="left:693.5px;top:128.4px;width:1px;height:19px;background:#b5b8bd;"></div>
<div style="left:694.5px;top:128.4px;width:1px;height:19px;background:#f7f7f9;"></div>
<div class="t" style="left:298.7px;top:131.34px;font-size:12px;line-height:12px;color:#111;transform:scaleX(0.958);transform-origin:0 0;">STT</div>
<div class="t" style="left:350.2px;top:131.34px;font-size:12px;line-height:12px;color:#111;transform:scaleX(0.958);transform-origin:0 0;">Host</div>
<div class="t" style="left:465.7px;top:131.34px;font-size:12px;line-height:12px;color:#111;transform:scaleX(0.958);transform-origin:0 0;">Username</div>
<div class="t" style="left:582.0px;top:131.34px;font-size:12px;line-height:12px;color:#111;transform:scaleX(0.958);transform-origin:0 0;">Password</div>
<div class="t" style="left:298.7px;top:149.74px;font-size:12px;line-height:12px;color:#161616;transform:scaleX(0.958);transform-origin:0 0;">819</div>
<div class="t" style="left:350.4px;top:149.74px;font-size:12px;line-height:12px;color:#161616;transform:scaleX(0.958);transform-origin:0 0;">117.220.53.143</div>
<div class="t" style="left:465.5px;top:149.74px;font-size:12px;line-height:12px;color:#161616;transform:scaleX(0.958);transform-origin:0 0;">root</div>
<div class="t" style="left:582.0px;top:149.74px;font-size:12px;line-height:12px;color:#161616;transform:scaleX(0.958);transform-origin:0 0;">root</div>
<div style="left:295.3px;top:162.57px;width:398.7px;height:14.67px;background:#f2f2f2;"></div>
<div class="t" style="left:298.7px;top:164.41px;font-size:12px;line-height:12px;color:#161616;transform:scaleX(0.958);transform-origin:0 0;">820</div>
<div class="t" style="left:350.4px;top:164.41px;font-size:12px;line-height:12px;color:#161616;transform:scaleX(0.958);transform-origin:0 0;">117.220.66.25</div>
<div class="t" style="left:465.5px;top:164.41px;font-size:12px;line-height:12px;color:#161616;transform:scaleX(0.958);transform-origin:0 0;">root</div>
<div class="t" style="left:582.0px;top:164.41px;font-size:12px;line-height:12px;color:#161616;transform:scaleX(0.958);transform-origin:0 0;">root</div>
<div class="t" style="left:298.7px;top:179.08px;font-size:12px;line-height:12px;color:#161616;transform:scaleX(0.958);transform-origin:0 0;">821</div>
<div class="t" style="left:350.4px;top:179.08px;font-size:12px;line-height:12px;color:#161616;transform:scaleX(0.958);transform-origin:0 0;">117.220.83.159</div>
<div class="t" style="left:465.5px;top:179.08px;font-size:12px;line-height:12px;color:#161616;transform:scaleX(0.958);transform-origin:0 0;">root</div>
<div class="t" style="left:582.0px;top:179.08px;font-size:12px;line-height:12px;color:#161616;transform:scaleX(0.958);transform-origin:0 0;">root</div>
<div style="left:295.3px;top:191.91px;width:398.7px;height:14.67px;background:#f2f2f2;"></div>
<div class="t" style="left:298.7px;top:193.75px;font-size:12px;line-height:12px;color:#161616;transform:scaleX(0.958);transform-origin:0 0;">822</div>
<div class="t" style="left:350.4px;top:193.75px;font-size:12px;line-height:12px;color:#161616;transform:scaleX(0.958);transform-origin:0 0;">117.220.87.122</div>
<div class="t" style="left:465.5px;top:193.75px;font-size:12px;line-height:12px;color:#161616;transform:scaleX(0.958);transform-origin:0 0;">support</div>
<div class="t" style="left:582.0px;top:193.75px;font-size:12px;line-height:12px;color:#161616;transform:scaleX(0.958);transform-origin:0 0;">support</div>
<div class="t" style="left:298.7px;top:208.42px;font-size:12px;line-height:12px;color:#161616;transform:scaleX(0.958);transform-origin:0 0;">823</div>
<div class="t" style="left:350.4px;top:208.42px;font-size:12px;line-height:12px;color:#161616;transform:scaleX(0.958);transform-origin:0 0;">117.220.122.45</div>
<div class="t" style="left:465.5px;top:208.42px;font-size:12px;line-height:12px;color:#161616;transform:scaleX(0.958);transform-origin:0 0;">root</div>
<div class="t" style="left:582.0px;top:208.42px;font-size:12px;line-height:12px;color:#161616;transform:scaleX(0.958);transform-origin:0 0;">root</div>
<div style="left:295.3px;top:221.25px;width:398.7px;height:14.67px;background:#f2f2f2;"></div>
<div class="t" style="left:298.7px;top:223.09px;font-size:12px;line-height:12px;color:#161616;transform:scaleX(0.958);transform-origin:0 0;">824</div>
<div class="t" style="left:350.4px;top:223.09px;font-size:12px;line-height:12px;color:#161616;transform:scaleX(0.958);transform-origin:0 0;">117.220.129.129</div>
<div class="t" style="left:465.5px;top:223.09px;font-size:12px;line-height:12px;color:#161616;transform:scaleX(0.958);transform-origin:0 0;">admin</div>
<div class="t" style="left:582.0px;top:223.09px;font-size:12px;line-height:12px;color:#161616;transform:scaleX(0.958);transform-origin:0 0;">admin</div>
<div class="t" style="left:298.7px;top:237.76px;font-size:12px;line-height:12px;color:#161616;transform:scaleX(0.958);transform-origin:0 0;">825</div>
<div class="t" style="left:350.4px;top:237.76px;font-size:12px;line-height:12px;color:#161616;transform:scaleX(0.958);transform-origin:0 0;">117.220.162.24</div>
<div class="t" style="left:465.5px;top:237.76px;font-size:12px;line-height:12px;color:#161616;transform:scaleX(0.958);transform-origin:0 0;">admin</div>
<div class="t" style="left:582.0px;top:237.76px;font-size:12px;line-height:12px;color:#161616;transform:scaleX(0.958);transform-origin:0 0;">admin</div>
<div style="left:295.3px;top:250.59px;width:398.7px;height:14.67px;background:#f2f2f2;"></div>
<div class="t" style="left:298.7px;top:252.43px;font-size:12px;line-height:12px;color:#161616;transform:scaleX(0.958);transform-origin:0 0;">826</div>
<div class="t" style="left:350.4px;top:252.43px;font-size:12px;line-height:12px;color:#161616;transform:scaleX(0.958);transform-origin:0 0;">117.220.189.155</div>
<div class="t" style="left:465.5px;top:252.43px;font-size:12px;line-height:12px;color:#161616;transform:scaleX(0.958);transform-origin:0 0;">root</div>
<div class="t" style="left:582.0px;top:252.43px;font-size:12px;line-height:12px;color:#161616;transform:scaleX(0.958);transform-origin:0 0;">root</div>
<div class="t" style="left:298.7px;top:267.10px;font-size:12px;line-height:12px;color:#161616;transform:scaleX(0.958);transform-origin:0 0;">827</div>
<div class="t" style="left:350.4px;top:267.10px;font-size:12px;line-height:12px;color:#161616;transform:scaleX(0.958);transform-origin:0 0;">117.220.192.55</div>
<div class="t" style="left:465.5px;top:267.10px;font-size:12px;line-height:12px;color:#161616;transform:scaleX(0.958);transform-origin:0 0;">root</div>
<div class="t" style="left:582.0px;top:267.10px;font-size:12px;line-height:12px;color:#161616;transform:scaleX(0.958);transform-origin:0 0;">root</div>
<div style="left:295.3px;top:279.93px;width:398.7px;height:14.67px;background:#f2f2f2;"></div>
<div class="t" style="left:298.7px;top:281.77px;font-size:12px;line-height:12px;color:#161616;transform:scaleX(0.958);transform-origin:0 0;">828</div>
<div class="t" style="left:350.4px;top:281.77px;font-size:12px;line-height:12px;color:#161616;transform:scaleX(0.958);transform-origin:0 0;">117.220.192.238</div>
<div class="t" style="left:465.5px;top:281.77px;font-size:12px;line-height:12px;color:#161616;transform:scaleX(0.958);transform-origin:0 0;">root</div>
<div class="t" style="left:582.0px;top:281.77px;font-size:12px;line-height:12px;color:#161616;transform:scaleX(0.958);transform-origin:0 0;">root</div>
<div class="t" style="left:298.7px;top:296.44px;font-size:12px;line-height:12px;color:#161616;transform:scaleX(0.958);transform-origin:0 0;">829</div>
<div class="t" style="left:350.4px;top:296.44px;font-size:12px;line-height:12px;color:#161616;transform:scaleX(0.958);transform-origin:0 0;">117.220.197.35</div>
<div class="t" style="left:465.5px;top:296.44px;font-size:12px;line-height:12px;color:#161616;transform:scaleX(0.958);transform-origin:0 0;">root</div>
<div class="t" style="left:582.0px;top:296.44px;font-size:12px;line-height:12px;color:#161616;transform:scaleX(0.958);transform-origin:0 0;">root</div>
<div style="left:295.3px;top:309.27px;width:398.7px;height:14.67px;background:#f2f2f2;"></div>
<div class="t" style="left:298.7px;top:311.11px;font-size:12px;line-height:12px;color:#161616;transform:scaleX(0.958);transform-origin:0 0;">830</div>
<div class="t" style="left:350.4px;top:311.11px;font-size:12px;line-height:12px;color:#161616;transform:scaleX(0.958);transform-origin:0 0;">117.220.197.77</div>
<div class="t" style="left:465.5px;top:311.11px;font-size:12px;line-height:12px;color:#161616;transform:scaleX(0.958);transform-origin:0 0;">root</div>
<div class="t" style="left:582.0px;top:311.11px;font-size:12px;line-height:12px;color:#161616;transform:scaleX(0.958);transform-origin:0 0;">root</div>
<div class="t" style="left:298.7px;top:325.78px;font-size:12px;line-height:12px;color:#161616;transform:scaleX(0.958);transform-origin:0 0;">831</div>
<div class="t" style="left:350.4px;top:325.78px;font-size:12px;line-height:12px;color:#161616;transform:scaleX(0.958);transform-origin:0 0;">117.221.3.104</div>
<div class="t" style="left:465.5px;top:325.78px;font-size:12px;line-height:12px;color:#161616;transform:scaleX(0.958);transform-origin:0 0;">admin</div>
<div class="t" style="left:582.0px;top:325.78px;font-size:12px;line-height:12px;color:#161616;transform:scaleX(0.958);transform-origin:0 0;">admin</div>
<div style="left:295.3px;top:338.61px;width:398.7px;height:14.67px;background:#f2f2f2;"></div>
<div class="t" style="left:298.7px;top:340.45px;font-size:12px;line-height:12px;color:#161616;transform:scaleX(0.958);transform-origin:0 0;">832</div>
<div class="t" style="left:350.4px;top:340.45px;font-size:12px;line-height:12px;color:#161616;transform:scaleX(0.958);transform-origin:0 0;">117.221.5.239</div>
<div class="t" style="left:465.5px;top:340.45px;font-size:12px;line-height:12px;color:#161616;transform:scaleX(0.958);transform-origin:0 0;">root</div>
<div class="t" style="left:582.0px;top:340.45px;font-size:12px;line-height:12px;color:#161616;transform:scaleX(0.958);transform-origin:0 0;">root</div>
<div class="t" style="left:298.7px;top:355.12px;font-size:12px;line-height:12px;color:#161616;transform:scaleX(0.958);transform-origin:0 0;">833</div>
<div class="t" style="left:350.4px;top:355.12px;font-size:12px;line-height:12px;color:#161616;transform:scaleX(0.958);transform-origin:0 0;">117.221.19.138</div>
<div class="t" style="left:465.5px;top:355.12px;font-size:12px;line-height:12px;color:#161616;transform:scaleX(0.958);transform-origin:0 0;">root</div>
<div class="t" style="left:582.0px;top:355.12px;font-size:12px;line-height:12px;color:#161616;transform:scaleX(0.958);transform-origin:0 0;">root</div>
<div style="left:295.3px;top:367.95000000000005px;width:398.7px;height:14.67px;background:#396990;"></div>
<div class="t" style="left:298.7px;top:369.79px;font-size:12px;line-height:12px;color:#eef3f7;transform:scaleX(0.958);transform-origin:0 0;">834</div>
<div class="t" style="left:350.4px;top:369.79px;font-size:12px;line-height:12px;color:#eef3f7;transform:scaleX(0.958);transform-origin:0 0;">117.221.27.221</div>
<div class="t" style="left:465.5px;top:369.79px;font-size:12px;line-height:12px;color:#eef3f7;transform:scaleX(0.958);transform-origin:0 0;">root</div>
<div class="t" style="left:582.0px;top:369.79px;font-size:12px;line-height:12px;color:#eef3f7;transform:scaleX(0.958);transform-origin:0 0;">root</div>
<div class="t" style="left:298.7px;top:384.46px;font-size:12px;line-height:12px;color:#161616;transform:scaleX(0.958);transform-origin:0 0;">835</div>
<div class="t" style="left:350.4px;top:384.46px;font-size:12px;line-height:12px;color:#161616;transform:scaleX(0.958);transform-origin:0 0;">117.221.30.77</div>
<div class="t" style="left:465.5px;top:384.46px;font-size:12px;line-height:12px;color:#161616;transform:scaleX(0.958);transform-origin:0 0;">root</div>
<div class="t" style="left:582.0px;top:384.46px;font-size:12px;line-height:12px;color:#161616;transform:scaleX(0.958);transform-origin:0 0;">root</div>
<div style="left:295.3px;top:397.28999999999996px;width:398.7px;height:14.67px;background:#f2f2f2;"></div>
<div class="t" style="left:298.7px;top:399.13px;font-size:12px;line-height:12px;color:#161616;transform:scaleX(0.958);transform-origin:0 0;">836</div>
<div class="t" style="left:350.4px;top:399.13px;font-size:12px;line-height:12px;color:#161616;transform:scaleX(0.958);transform-origin:0 0;">117.221.45.254</div>
<div class="t" style="left:465.5px;top:399.13px;font-size:12px;line-height:12px;color:#161616;transform:scaleX(0.958);transform-origin:0 0;">root</div>
<div class="t" style="left:582.0px;top:399.13px;font-size:12px;line-height:12px;color:#161616;transform:scaleX(0.958);transform-origin:0 0;">root</div>
<div class="t" style="left:298.7px;top:413.80px;font-size:12px;line-height:12px;color:#161616;transform:scaleX(0.958);transform-origin:0 0;">837</div>
<div class="t" style="left:350.4px;top:413.80px;font-size:12px;line-height:12px;color:#161616;transform:scaleX(0.958);transform-origin:0 0;">117.221.62.28</div>
<div class="t" style="left:465.5px;top:413.80px;font-size:12px;line-height:12px;color:#161616;transform:scaleX(0.958);transform-origin:0 0;">admin</div>
<div class="t" style="left:582.0px;top:413.80px;font-size:12px;line-height:12px;color:#161616;transform:scaleX(0.958);transform-origin:0 0;">admin</div>
<div style="left:295.3px;top:426.63px;width:398.7px;height:14.67px;background:#f2f2f2;"></div>
<div class="t" style="left:298.7px;top:428.47px;font-size:12px;line-height:12px;color:#161616;transform:scaleX(0.958);transform-origin:0 0;">838</div>
<div class="t" style="left:350.4px;top:428.47px;font-size:12px;line-height:12px;color:#161616;transform:scaleX(0.958);transform-origin:0 0;">117.221.92.8</div>
<div class="t" style="left:465.5px;top:428.47px;font-size:12px;line-height:12px;color:#161616;transform:scaleX(0.958);transform-origin:0 0;">admin</div>
<div class="t" style="left:582.0px;top:428.47px;font-size:12px;line-height:12px;color:#161616;transform:scaleX(0.958);transform-origin:0 0;">admin</div>
<div class="t" style="left:298.7px;top:443.14px;font-size:12px;line-height:12px;color:#161616;transform:scaleX(0.958);transform-origin:0 0;">839</div>
<div class="t" style="left:350.4px;top:443.14px;font-size:12px;line-height:12px;color:#161616;transform:scaleX(0.958);transform-origin:0 0;">117.221.103.201</div>
<div class="t" style="left:465.5px;top:443.14px;font-size:12px;line-height:12px;color:#161616;transform:scaleX(0.958);transform-origin:0 0;">root</div>
<div class="t" style="left:582.0px;top:443.14px;font-size:12px;line-height:12px;color:#161616;transform:scaleX(0.958);transform-origin:0 0;">root</div>
<div style="left:295.3px;top:455.97px;width:398.7px;height:14.67px;background:#f2f2f2;"></div>
<div class="t" style="left:298.7px;top:457.81px;font-size:12px;line-height:12px;color:#161616;transform:scaleX(0.958);transform-origin:0 0;">840</div>
<div class="t" style="left:350.4px;top:457.81px;font-size:12px;line-height:12px;color:#161616;transform:scaleX(0.958);transform-origin:0 0;">117.221.129.55</div>
<div class="t" style="left:465.5px;top:457.81px;font-size:12px;line-height:12px;color:#161616;transform:scaleX(0.958);transform-origin:0 0;">root</div>
<div class="t" style="left:582.0px;top:457.81px;font-size:12px;line-height:12px;color:#161616;transform:scaleX(0.958);transform-origin:0 0;">root</div>
<div class="t" style="left:298.7px;top:472.48px;font-size:12px;line-height:12px;color:#161616;transform:scaleX(0.958);transform-origin:0 0;">841</div>
<div class="t" style="left:350.4px;top:472.48px;font-size:12px;line-height:12px;color:#161616;transform:scaleX(0.958);transform-origin:0 0;">117.221.155.140</div>
<div class="t" style="left:465.5px;top:472.48px;font-size:12px;line-height:12px;color:#161616;transform:scaleX(0.958);transform-origin:0 0;">support</div>
<div class="t" style="left:582.0px;top:472.48px;font-size:12px;line-height:12px;color:#161616;transform:scaleX(0.958);transform-origin:0 0;">support</div>
<div style="left:295.3px;top:485.31000000000006px;width:398.7px;height:14.67px;background:#f2f2f2;"></div>
<div class="t" style="left:298.7px;top:487.15px;font-size:12px;line-height:12px;color:#161616;transform:scaleX(0.958);transform-origin:0 0;">842</div>
<div class="t" style="left:350.4px;top:487.15px;font-size:12px;line-height:12px;color:#161616;transform:scaleX(0.958);transform-origin:0 0;">117.221.156.95</div>
<div class="t" style="left:465.5px;top:487.15px;font-size:12px;line-height:12px;color:#161616;transform:scaleX(0.958);transform-origin:0 0;">support</div>
<div class="t" style="left:582.0px;top:487.15px;font-size:12px;line-height:12px;color:#161616;transform:scaleX(0.958);transform-origin:0 0;">support</div>
<div class="t" style="left:298.7px;top:501.82px;font-size:12px;line-height:12px;color:#161616;transform:scaleX(0.958);transform-origin:0 0;">843</div>
<div class="t" style="left:350.4px;top:501.82px;font-size:12px;line-height:12px;color:#161616;transform:scaleX(0.958);transform-origin:0 0;">117.221.173.27</div>
<div class="t" style="left:465.5px;top:501.82px;font-size:12px;line-height:12px;color:#161616;transform:scaleX(0.958);transform-origin:0 0;">admin</div>
<div class="t" style="left:582.0px;top:501.82px;font-size:12px;line-height:12px;color:#161616;transform:scaleX(0.958);transform-origin:0 0;">admin</div>
<div style="left:295.3px;top:514.65px;width:398.7px;height:14.67px;background:#f2f2f2;"></div>
<div class="t" style="left:298.7px;top:516.49px;font-size:12px;line-height:12px;color:#161616;transform:scaleX(0.958);transform-origin:0 0;">844</div>
<div class="t" style="left:350.4px;top:516.49px;font-size:12px;line-height:12px;color:#161616;transform:scaleX(0.958);transform-origin:0 0;">117.221.190.89</div>
<div class="t" style="left:465.5px;top:516.49px;font-size:12px;line-height:12px;color:#161616;transform:scaleX(0.958);transform-origin:0 0;">admin</div>
<div class="t" style="left:582.0px;top:516.49px;font-size:12px;line-height:12px;color:#161616;transform:scaleX(0.958);transform-origin:0 0;">admin</div>
<div class="t" style="left:298.7px;top:531.16px;font-size:12px;line-height:12px;color:#161616;transform:scaleX(0.958);transform-origin:0 0;">845</div>
<div class="t" style="left:350.4px;top:531.16px;font-size:12px;line-height:12px;color:#161616;transform:scaleX(0.958);transform-origin:0 0;">117.221.191.115</div>
<div class="t" style="left:465.5px;top:531.16px;font-size:12px;line-height:12px;color:#161616;transform:scaleX(0.958);transform-origin:0 0;">root</div>
<div class="t" style="left:582.0px;top:531.16px;font-size:12px;line-height:12px;color:#161616;transform:scaleX(0.958);transform-origin:0 0;">root</div>
<div style="left:694px;top:148px;width:9.8px;height:394.4px;background:linear-gradient(90deg,#b9bcc1,#e3e4e7 45%,#d9dadd);border-left:1px solid #a9acb1;"></div>
<svg style="position:absolute;left:695px;top:150px" width="10" height="10" viewBox="0 0 10 10"><path d="M1.8 8 H8.2 L5 2.5 Z" fill="#333"/></svg>
<svg style="position:absolute;left:695px;top:531px" width="10" height="10" viewBox="0 0 10 10"><path d="M1.8 2 H8.2 L5 7.5 Z" fill="#333"/></svg>
<div style="left:695px;top:162px;width:8.8px;height:6px;background:linear-gradient(90deg,#6a6e75,#b4b7bc 50%,#e2e3e6);border-radius:0 8px 0 0;"></div>
<div style="left:695px;top:501px;width:9.5px;height:26.5px;border:1.6px solid #27313c;border-left:none;border-radius:0 10px 10px 0;background:linear-gradient(90deg,#eef5fa,#cadbea 50%,#b2c7db);"></div>
<div class="t" style="left:298px;top:569.99px;font-size:11px;line-height:11px;color:#1c1ca8;font-weight:bold;">Die 117.221.228.89</div>
<div style="left:587.5px;top:560px;width:115.0px;height:21px;border:1px solid #5f656d;border-radius:4px;background:linear-gradient(#fbfbfc,#eaebee 55%,#d4d6da);box-shadow:0 1px 0 #c9cbd0;"></div>
<div class="t" style="left:495.0px;width:300px;text-align:center;top:564.94px;font-size:12px;line-height:12px;color:#151515;transform:scaleX(0.8909400000000001);transform-origin:50% 0;">NO LIMIT THREAD</div>
<div style="left:720px;top:161.5px;width:362px;height:315.0px;background:linear-gradient(#b9cadb,#c6d5e3 5%,#d4e1ec 8.5%,#d6e1ed 20%,#d3deeb 60%,#d1dcea);border:1px solid #e6ecf2;border-radius:6px 6px 0 0;"></div>
<svg style="position:absolute;left:728.5px;top:170px" width="14" height="14" viewBox="0 0 14 14"><defs><radialGradient id="orb" cx="50%" cy="50%" r="50%"><stop offset="0" stop-color="#6ee05a"/><stop offset="0.45" stop-color="#1c8a1c"/><stop offset="0.8" stop-color="#0a3d0c"/><stop offset="1" stop-color="#051a06"/></radialGradient></defs><circle cx="7" cy="7" r="6.6" fill="url(#orb)"/><circle cx="6" cy="5.5" r="1.8" fill="#b8ffa0" opacity="0.6"/></svg>
<div class="t" style="left:746.5px;top:171.34px;font-size:12px;line-height:12px;color:#4a5562;transform:scaleX(0.835);transform-origin:0 0;">SSH Fresh Checker 2.00</div>
<div style="left:945.5px;top:170px;width:28.0px;height:15px;border:1px solid #97a9bd;border-radius:2px;background:linear-gradient(#d6e0ea,#c4d1df);box-shadow:inset 0 0 0 1px #e2e9f1;"></div>
<div style="left:985px;top:170px;width:27.5px;height:15px;border:1px solid #97a9bd;border-radius:2px;background:linear-gradient(#d6e0ea,#c4d1df);box-shadow:inset 0 0 0 1px #e2e9f1;"></div>
<div style="left:1015.5px;top:170px;width:28.0px;height:15px;border:1px solid #97a9bd;border-radius:2px;background:linear-gradient(#d6e0ea,#c4d1df);box-shadow:inset 0 0 0 1px #e2e9f1;"></div>
<div style="left:1045.5px;top:170px;width:28.0px;height:15px;border:1px solid #97a9bd;border-radius:2px;background:linear-gradient(#d6e0ea,#c4d1df);box-shadow:inset 0 0 0 1px #e2e9f1;"></div>
<svg style="position:absolute;left:951.5px;top:172.5px" width="16" height="10" viewBox="0 0 16 10"><path d="M1 5 L5 1 V3.3 H11 V1 L15 5 L11 9 V6.7 H5 V9 Z" fill="#fafbfc" stroke="#58616b" stroke-width="1.1" stroke-linejoin="round"/></svg>
<div style="left:993.25px;top:178.0px;width:11px;height:5px;border:1px solid #525b65;border-radius:2px;background:linear-gradient(#ffffff,#dfe3e7 60%,#b9bfc6);"></div>
<svg style="position:absolute;left:1023.5px;top:172.5px" width="12" height="10" viewBox="0 0 12 10"><rect x="1.2" y="1.2" width="9.6" height="7.8" rx="1.5" fill="#e3e7eb" stroke="#5a636d" stroke-width="1.3"/><rect x="3.9" y="3.7" width="4.2" height="2.7" fill="#fdfdfd" stroke="#5a636d" stroke-width="1"/></svg>
<svg style="position:absolute;left:1053.0px;top:173.0px" width="13" height="10" viewBox="0 0 13 10"><path d="M2.8 2 L10.2 7.8 M10.2 2 L2.8 7.8" stroke="#535c66" stroke-width="3.3" stroke-linecap="round"/><path d="M2.8 2 L10.2 7.8 M10.2 2 L2.8 7.8" stroke="#f7f8fa" stroke-width="1.4" stroke-linecap="round"/></svg>
<div style="left:727px;top:188px;width:349px;height:282px;background:#fff;"></div>
<div style="left:726.8px;top:206px;width:347.5px;height:264px;border:1px solid #898c8f;border-bottom:none;background:#fff;"></div>
<div style="left:726.8px;top:188.5px;width:69.5px;height:18.5px;border:1px solid #898c8f;border-bottom:none;background:#fff;"></div>
<div class="t" style="left:733.5px;top:191.02px;font-size:11.2px;line-height:11.2px;color:#111;transform:scaleX(0.87);transform-origin:0 0;">Check Fresh</div>
<div style="left:736.5px;top:219px;width:327.0px;height:118.5px;border:1px solid #dcdcdc;border-radius:3px;"></div>
<div style="left:740.8px;top:217px;width:39px;height:4px;background:#fff;"></div>
<div class="t" style="left:743.8px;top:214.02px;font-size:11.2px;line-height:11.2px;color:#111;transform:scaleX(0.87);transform-origin:0 0;">Options</div>
<div style="left:736.5px;top:350px;width:327.0px;height:93.5px;border:1px solid #dcdcdc;border-radius:3px;"></div>
<div style="left:741.4px;top:348px;width:33px;height:4px;background:#fff;"></div>
<div class="t" style="left:744.4px;top:345.02px;font-size:11.2px;line-height:11.2px;color:#111;transform:scaleX(0.87);transform-origin:0 0;">Static</div>
<div class="t" style="left:744.6px;top:238.09px;font-size:11px;line-height:11px;color:#111;transform:scaleX(0.88);transform-origin:0 0;">SSH File</div>
<div class="t" style="left:744.6px;top:261.29px;font-size:11px;line-height:11px;color:#111;transform:scaleX(0.88);transform-origin:0 0;">Split</div>
<div class="t" style="left:744.6px;top:285.29px;font-size:11px;line-height:11px;color:#111;transform:scaleX(0.88);transform-origin:0 0;">Time out</div>
<div class="t" style="left:744.6px;top:308.99px;font-size:11px;line-height:11px;color:#111;transform:scaleX(0.88);transform-origin:0 0;">Threads</div>
<div style="left:802px;top:231.5px;width:225.5px;height:17px;background:#efefef;border:1px solid #c5c5c5;"></div>
<div class="t" style="left:804px;top:233.99px;font-size:11px;line-height:11px;color:#111;transform:scaleX(0.9);transform-origin:0 0;">C:\Users\Administrator\Documents\845-in.txt</div>
<div style="left:1034.5px;top:230.5px;width:22.5px;height:18.5px;border:1px solid #707070;border-radius:3px;background:linear-gradient(#f2f2f2,#ebebeb 50%,#dddddd 51%,#cfcfcf);"></div>
<div class="t" style="left:1040px;top:234.69px;font-size:11px;line-height:11px;color:#111;">...</div>
<div style="left:802px;top:255.5px;width:56.5px;height:17px;background:#fff;border:1px solid #d5d5d5;"></div>
<div style="left:829.5px;top:259.5px;width:1px;height:9px;background:#cfa060;"></div>
<div style="left:802px;top:279px;width:56.5px;height:17.5px;background:#fff;border:1px solid #8f8f8f;box-shadow:inset 0 0 0 1px #e3e3e3;"></div>
<div class="t" style="left:673.2px;width:300px;text-align:center;top:282.69px;font-size:11px;line-height:11px;color:#111;transform:scaleX(0.88);transform-origin:50% 0;">10</div>
<div style="left:844px;top:281px;width:13px;height:7px;border:1px solid #c9ced6;background:linear-gradient(#f6f8fb,#e6ebf2);"></div>
<div style="left:844px;top:287.5px;width:13px;height:7px;border:1px solid #c9ced6;background:linear-gradient(#f6f8fb,#e6ebf2);"></div>
<svg style="position:absolute;left:846px;top:282px" width="9" height="5" viewBox="0 0 9 5"><path d="M1.5 4 L4.5 1 L7.5 4" fill="none" stroke="#4f6f9f" stroke-width="1.2"/></svg>
<svg style="position:absolute;left:846px;top:288.5px" width="9" height="5" viewBox="0 0 9 5"><path d="M1.5 1 L4.5 4 L7.5 1" fill="none" stroke="#4f6f9f" stroke-width="1.2"/></svg>
<div style="left:802px;top:302.5px;width:56.5px;height:17.5px;background:#fff;border:1px solid #8f8f8f;box-shadow:inset 0 0 0 1px #e3e3e3;"></div>
<div class="t" style="left:673.2px;width:300px;text-align:center;top:306.19px;font-size:11px;line-height:11px;color:#111;transform:scaleX(0.88);transform-origin:50% 0;">100</div>
<div style="left:844px;top:304.5px;width:13px;height:7px;border:1px solid #c9ced6;background:linear-gradient(#f6f8fb,#e6ebf2);"></div>
<div style="left:844px;top:311.0px;width:13px;height:7px;border:1px solid #c9ced6;background:linear-gradient(#f6f8fb,#e6ebf2);"></div>
<svg style="position:absolute;left:846px;top:305.5px" width="9" height="5" viewBox="0 0 9 5"><path d="M1.5 4 L4.5 1 L7.5 4" fill="none" stroke="#4f6f9f" stroke-width="1.2"/></svg>
<svg style="position:absolute;left:846px;top:312.0px" width="9" height="5" viewBox="0 0 9 5"><path d="M1.5 1 L4.5 4 L7.5 1" fill="none" stroke="#4f6f9f" stroke-width="1.2"/></svg>
<div style="left:923.5px;top:258.5px;width:12.5px;height:12.5px;border:1px solid #9c9c9c;border-radius:2px;background:linear-gradient(135deg,#d6d6d6,#f8f8f8);box-shadow:inset 0 0 0 1px #f0f0f0;"></div>
<div class="t" style="left:940.8px;top:259.69px;font-size:11px;line-height:11px;color:#111;transform:scaleX(0.88);transform-origin:0 0;">Check proxy score</div>
<div style="left:923.5px;top:279.5px;width:12.5px;height:12.5px;border:1px solid #9c9c9c;border-radius:2px;background:linear-gradient(135deg,#d6d6d6,#f8f8f8);box-shadow:inset 0 0 0 1px #f0f0f0;"></div>
<svg style="position:absolute;left:923.5px;top:279.5px" width="13" height="13" viewBox="0 0 13 13"><path d="M3 6.5 L5.5 9.5 L10 3" fill="none" stroke="#3c4f8a" stroke-width="1.6"/></svg>
<div class="t" style="left:940.8px;top:280.39px;font-size:11px;line-height:11px;color:#111;transform:scaleX(0.88);transform-origin:0 0;">Check Blacklist</div>
<div class="t" style="left:744.6px;top:368.89px;font-size:11px;line-height:11px;color:#111;transform:scaleX(0.88);transform-origin:0 0;">Checked</div>
<div class="t" style="left:744.6px;top:392.39px;font-size:11px;line-height:11px;color:#111;transform:scaleX(0.88);transform-origin:0 0;">Fresh</div>
<div class="t" style="left:744.6px;top:416.09px;font-size:11px;line-height:11px;color:#111;transform:scaleX(0.88);transform-origin:0 0;">Status</div>
<div style="left:802px;top:362px;width:107px;height:18px;background:#fff;border:1px solid #646464;box-shadow:inset -1px -1px 0 #c8c8c8;"></div>
<div class="t" style="right:179px;top:365.69px;font-size:11px;line-height:11px;color:#111;transform:scaleX(0.88);transform-origin:100% 0;">845</div>
<div style="left:802px;top:386px;width:107px;height:18px;background:#fff;border:1px solid #646464;box-shadow:inset -1px -1px 0 #c8c8c8;"></div>
<div class="t" style="right:179px;top:389.69px;font-size:11px;line-height:11px;color:#111;transform:scaleX(0.88);transform-origin:100% 0;">165</div>
<div style="left:802px;top:409.5px;width:256.5px;height:18.0px;background:#fff;border:1px solid #646464;box-shadow:inset -1px -1px 0 #c8c8c8;"></div>
<div class="t" style="left:803.5px;top:412.69px;font-size:11px;line-height:11px;color:#111;transform:scaleX(0.88);transform-origin:0 0;">Completed !!!</div>
<div style="left:930.5px;top:359.5px;width:61.0px;height:20.5px;background:#fff;border:1px solid #141414;"></div>
<div class="t" style="left:811.0px;width:300px;text-align:center;top:364.19px;font-size:11px;line-height:11px;color:#111;transform:scaleX(0.88);transform-origin:50% 0;">Start</div>
<div style="left:997.5px;top:359.5px;width:61.0px;height:20.5px;background:#fff;border:1px solid #141414;"></div>
<div class="t" style="left:878.0px;width:300px;text-align:center;top:364.19px;font-size:11px;line-height:11px;color:#111;transform:scaleX(0.88);transform-origin:50% 0;">View SSH</div>
<div style="left:930.5px;top:383.5px;width:61.0px;height:20.5px;background:#fff;border:2px solid #141414;"></div>
<div class="t" style="left:811.0px;width:300px;text-align:center;top:388.19px;font-size:11px;line-height:11px;color:#111;transform:scaleX(0.88);transform-origin:50% 0;">Export...</div>
<div style="left:997.5px;top:383.5px;width:61.0px;height:20.5px;background:#fff;border:1px solid #141414;"></div>
<div class="t" style="left:878.0px;width:300px;text-align:center;top:388.19px;font-size:11px;line-height:11px;color:#111;transform:scaleX(0.88);transform-origin:50% 0;">About</div>
<div style="left:727px;top:450px;width:349px;height:20px;background:#00b9f2;"></div>
<div class="t" style="left:730.7px;top:454.72px;font-size:11.2px;line-height:11.2px;color:#e8f6fb;font-weight:bold;letter-spacing:-0.2px;">Developed by thanhps42</div>
<div style="left:0px;top:660.5px;width:1085px;height:35.5px;background:linear-gradient(90deg,#a8bfda 0%,#a8bfda 74.5%,#9ab0c8 76.5%,#8ca0b6 78.5%,#8b9fb5 90%,#90a3b8 100%);border-top:1px solid #c9d6e6;"></div>
<div style="left:0px;top:696px;width:1085px;height:1px;background:#3b4452;"></div>
<div style="left:0px;top:697px;width:1085px;height:4px;background:#ebebeb;"></div>
<div style="left:-4px;top:662px;width:22.5px;height:33.5px;border:1px solid #e2eaf3;border-radius:3px;box-shadow:1px 0 0 #56667a;background:linear-gradient(#d2dded,#bccde2 50%,#b3c6dd);"></div>
<div style="left:136px;top:662px;width:53.5px;height:33.5px;border:1px solid #e2eaf3;border-radius:3px;box-shadow:1px 0 0 #56667a;background:linear-gradient(#d2dded,#bccde2 50%,#b3c6dd);"></div>
<div style="left:250px;top:662px;width:53.5px;height:33.5px;border:1px solid #e2eaf3;border-radius:3px;box-shadow:1px 0 0 #56667a;background:linear-gradient(#d2dded,#bccde2 50%,#b3c6dd);"></div>
<div style="left:307px;top:662px;width:53px;height:33.5px;border:1px solid #e2eaf3;border-radius:3px;box-shadow:1px 0 0 #56667a;background:radial-gradient(ellipse at 50% 80%,#c9e09a,#d7e6b8 50%,#e2ead6);border-color:#eef3e3;"></div>
<div style="left:363.5px;top:662px;width:53.5px;height:33.5px;border:1px solid #e2eaf3;border-radius:3px;box-shadow:1px 0 0 #56667a;background:linear-gradient(#d2dded,#bccde2 50%,#b3c6dd);"></div>
<div style="left:420.5px;top:662px;width:53.0px;height:33.5px;border:1px solid #e2eaf3;border-radius:3px;box-shadow:1px 0 0 #56667a;background:linear-gradient(#d2dded,#bccde2 50%,#b3c6dd);"></div>
<svg style="position:absolute;left:0px;top:665px" width="10" height="27" viewBox="0 0 10 27"><circle cx="-6" cy="13.5" r="13" fill="#f4c20d"/><path d="M-6 0.5 A13 13 0 0 1 7 13.5 L-6 13.5 Z" fill="#e0442f"/><circle cx="-6" cy="13.5" r="6" fill="#f1f1f1"/></svg>
<svg style="position:absolute;left:35px;top:665px" width="28" height="28" viewBox="0 0 28 28"><defs><radialGradient id="ffg" cx="60%" cy="35%" r="55%"><stop offset="0" stop-color="#5fc0f0"/><stop offset="0.6" stop-color="#1d5fb0"/><stop offset="1" stop-color="#1a3f8a"/></radialGradient><radialGradient id="ffo" cx="35%" cy="65%" r="70%"><stop offset="0" stop-color="#f7a531"/><stop offset="0.6" stop-color="#e65a24"/><stop offset="1" stop-color="#c4311c"/></radialGradient></defs><circle cx="15" cy="13" r="11" fill="url(#ffg)"/><path d="M7 5 C2 9 1 17 5 22 C9 27 18 28 23 24 C27 21 28 15 26 10 C26 16 22 21 16 21 C11 21 8 17 9 13 C7 13 6 11 7 9 C6 8 6 6 7 5 Z" fill="url(#ffo)"/><path d="M10 3 C13 1.5 18 1.5 21 3 C18 3 16 4 14 6 C12 5 11 4 10 3 Z" fill="#f7b53a"/><path d="M24 5 C27 9 27.5 13 27 16" stroke="#f6c84a" stroke-width="1.6" fill="none"/></svg>
<svg style="position:absolute;left:91px;top:667px" width="31" height="24" viewBox="0 0 31 24"><rect x="3" y="3" width="13" height="13" fill="#a8e48a" transform="rotate(-12 9 9)"/><rect x="8" y="6" width="12" height="13" fill="#9fd0f0"/><rect x="13" y="5" width="14" height="15" fill="#f8e27a" transform="rotate(-14 20 12)"/></svg>
<svg style="position:absolute;left:147px;top:665px" width="30" height="27" viewBox="0 0 30 27"><path d="M3 22 L13 2 L27 7 L22 25 Z" fill="#e8eef2"/><path d="M3 21 L12 3 L25 7 L19 24 Z" fill="#4fb0c9"/><path d="M5 20 L12 6 L22 9 L17 22 Z" fill="#8ed0df" opacity="0.7"/><path d="M22 25 L27 7 L28 22 Z" fill="#b8a88a"/></svg>
<svg style="position:absolute;left:204px;top:666px" width="31" height="26" viewBox="0 0 31 26"><rect x="1.5" y="1.5" width="28" height="23" rx="4" fill="#fff" stroke="#d6dde5"/><rect x="4" y="4" width="23" height="18" fill="#1f6fb8"/><rect x="6" y="8" width="10" height="10" fill="#e8ecf0"/><rect x="17.5" y="8" width="8" height="10" fill="#e8ecf0"/><rect x="5.0" y="5" width="1.8" height="1.8" fill="#fff"/><rect x="5.0" y="19.3" width="1.8" height="1.8" fill="#fff"/><rect x="8.2" y="5" width="1.8" height="1.8" fill="#fff"/><rect x="8.2" y="19.3" width="1.8" height="1.8" fill="#fff"/><rect x="11.4" y="5" width="1.8" height="1.8" fill="#fff"/><rect x="11.4" y="19.3" width="1.8" height="1.8" fill="#fff"/><rect x="14.6" y="5" width="1.8" height="1.8" fill="#fff"/><rect x="14.6" y="19.3" width="1.8" height="1.8" fill="#fff"/><rect x="17.8" y="5" width="1.8" height="1.8" fill="#fff"/><rect x="17.8" y="19.3" width="1.8" height="1.8" fill="#fff"/><rect x="21.0" y="5" width="1.8" height="1.8" fill="#fff"/><rect x="21.0" y="19.3" width="1.8" height="1.8" fill="#fff"/><rect x="24.2" y="5" width="1.8" height="1.8" fill="#fff"/><rect x="24.2" y="19.3" width="1.8" height="1.8" fill="#fff"/></svg>
<svg style="position:absolute;left:261px;top:667px" width="29" height="23" viewBox="0 0 29 23"><rect x="0.5" y="0.5" width="28" height="22" fill="#f4f4f4" stroke="#8a8f95"/><rect x="3" y="4" width="12" height="16" fill="#2f8f6f"/><path d="M3 20 L15 8 V20 Z" fill="#79c2a0"/><path d="M17 6 H24 M17 9 H24 M17 12 H24 M17 15 H24 M17 18 H24" stroke="#777" stroke-width="1"/><rect x="25" y="5" width="2" height="8" fill="#2f8f6f"/></svg>
<svg style="position:absolute;left:322px;top:667px" width="22" height="22" viewBox="0 0 22 22"><path d="M2 19 C1 10 8 3 20 2.5 C20 13 14 19.5 2 19 Z" fill="none" stroke="#b5d876" stroke-width="3"/><path d="M5 16 L14 8" stroke="#c3de8c" stroke-width="2"/></svg>
<svg style="position:absolute;left:376px;top:663.5px" width="26" height="28" viewBox="0 0 26 28"><path d="M2 2 H19 L24 5 V26 H6 L2 23 Z" fill="#0e63b6"/><rect x="2" y="2" width="20" height="22" rx="1" fill="#1b8ae6"/><circle cx="12" cy="13" r="8" fill="#fff"/><path d="M5.5 13 L9 10 V12 H15 V10 L18.5 13 L15 16 V14 H9 V16 Z" fill="#0e63b6"/></svg>
<svg style="position:absolute;left:433px;top:665px" width="28" height="28" viewBox="0 0 28 28"><defs><radialGradient id="gl" cx="50%" cy="50%" r="50%"><stop offset="0.75" stop-color="#111"/><stop offset="0.9" stop-color="#2ccf2c"/><stop offset="1" stop-color="#0a3a0a"/></radialGradient></defs><circle cx="14" cy="14" r="13.5" fill="url(#gl)"/><circle cx="14" cy="14" r="11" fill="#141814"/><path d="M14 5 L17 9 L20 8 L19 12 L22 14 L18 16 L19 19 L15 18 L14 22 L13 18 L9 19 L10 16 L6 14 L9 12 L8 8 L11 9 Z" fill="#22b322"/><path d="M14 10 V23" stroke="#9f9" stroke-width="0.8"/></svg>
<svg style="position:absolute;left:855px;top:676px" width="9" height="6" viewBox="0 0 9 6"><path d="M0.5 5 L4.5 1 L8.5 5 Z" fill="#f3f6fa"/></svg>
<div style="left:874px;top:672px;width:15px;height:15px;background:#7e7e7e;border:1px solid #1f1f1f;"></div>
<svg style="position:absolute;left:896px;top:672px" width="15" height="15" viewBox="0 0 15 15"><path d="M1 7 L7.5 3.5 L14 7 L7.5 10.5 Z" fill="#8bc33a"/><path d="M1 8 L7.5 11.5 L14 8 V9.5 L7.5 13 L1 9.5 Z" fill="#f0c419"/><path d="M1 10 L7.5 13.5 L14 10 V11.5 L7.5 15 L1 11.5 Z" fill="#3a6fd8"/></svg>
<div style="left:918px;top:672px;width:15px;height:15px;background:linear-gradient(#fbe8ea,#f4c6cc);border:1px solid #c99aa1;"></div>
<svg style="position:absolute;left:918px;top:672px" width="15" height="15" viewBox="0 0 15 15"><path d="M3.5 3.5 L7.5 12 L11.5 3.5" fill="none" stroke="#b8283a" stroke-width="2.2"/></svg>
<svg style="position:absolute;left:940px;top:671px" width="15" height="17" viewBox="0 0 15 17"><path d="M2.5 1 V16" stroke="#1f252c" stroke-width="2.6"/><path d="M2.5 1 V16" stroke="#f4f6f8" stroke-width="1.2"/><path d="M3.5 2.5 C6 1 8 4 13.5 3 L11 6.5 L13.5 9.5 C8 10.5 6 7.5 3.5 9 Z" fill="#f4f6f8" stroke="#1f252c" stroke-width="0.9"/></svg>
<svg style="position:absolute;left:961px;top:671px" width="15" height="17" viewBox="0 0 15 17"><rect x="2" y="4" width="9" height="12" rx="1" fill="#f4f6f8" stroke="#4a5562" stroke-width="1"/><path d="M6 7 H14 M9 5 V9.5 M12 5 V9.5 M7.5 9.5 H13.5 V12 H7.5 Z" stroke="#4a5562" stroke-width="1.2" fill="#f4f6f8"/></svg>
<svg style="position:absolute;left:984px;top:673px" width="15" height="14" viewBox="0 0 15 14"><g fill="#f4f6f8" stroke="#2a3038" stroke-width="0.7"><rect x="1" y="11" width="2" height="2.6"/><rect x="4" y="9" width="2" height="4.6"/><rect x="7" y="6.5" width="2" height="7.1"/><rect x="10" y="4" width="2" height="9.6"/><rect x="13" y="1" width="2" height="12.6"/></g></svg>
<svg style="position:absolute;left:1006px;top:671px" width="16" height="17" viewBox="0 0 16 17"><path d="M1.5 6 H4.5 L9 2 V15 L4.5 11 H1.5 Z" fill="#f4f6f8" stroke="#4a5562" stroke-width="0.8"/><path d="M11 5.5 C12.5 7 12.5 10 11 11.5 M13 3.5 C15.5 6 15.5 11 13 13.5" stroke="#f4f6f8" stroke-width="1.4" fill="none"/></svg>
<div class="t" style="left:1039.8px;top:665.64px;font-size:12px;line-height:12px;color:#f2f5f9;transform:scaleX(0.86);transform-origin:0 0;">5:51 AM</div>
<div class="t" style="left:1036px;top:680.94px;font-size:12px;line-height:12px;color:#f2f5f9;transform:scaleX(0.86);transform-origin:0 0;">3/18/2016</div>
<div style="left:661px;top:0px;width:51px;height:11px;background:#ececec;"></div>
<div style="left:661px;top:0px;width:14px;height:11px;background:#cdcdcd;"></div>
<svg style="position:absolute;left:661px;top:0px" width="51" height="11" viewBox="0 0 51 11"><g fill="#fbfbfb"><rect x="2.8" y="1.9" width="2.2" height="2.2"/><rect x="2.8" y="6" width="2.2" height="2.2"/><rect x="6.9" y="1.9" width="2.2" height="2.2"/><rect x="6.9" y="6" width="2.2" height="2.2"/><rect x="11.0" y="1.9" width="2.2" height="2.2"/><rect x="11.0" y="6" width="2.2" height="2.2"/></g><g stroke="#7d7d7d" stroke-width="1.2" fill="none"><path d="M22 3 L18.8 6.2 M18.6 3.8 V6.4 H21.2"/><path d="M24 3 L27.2 6.2 M27.4 3.8 V6.4 H24.8"/></g><g fill="#9a9a9a"><rect x="18" y="0" width="1.2" height="1"/><rect x="20.5" y="0" width="1.2" height="1"/><rect x="24.5" y="0" width="1.2" height="1"/><rect x="27" y="0" width="1.2" height="1"/></g><path d="M36.2 -1.5 L41.5 4.6 L46.8 -1.5" stroke="#777" stroke-width="2.4" fill="none"/></svg>
</body></html>
